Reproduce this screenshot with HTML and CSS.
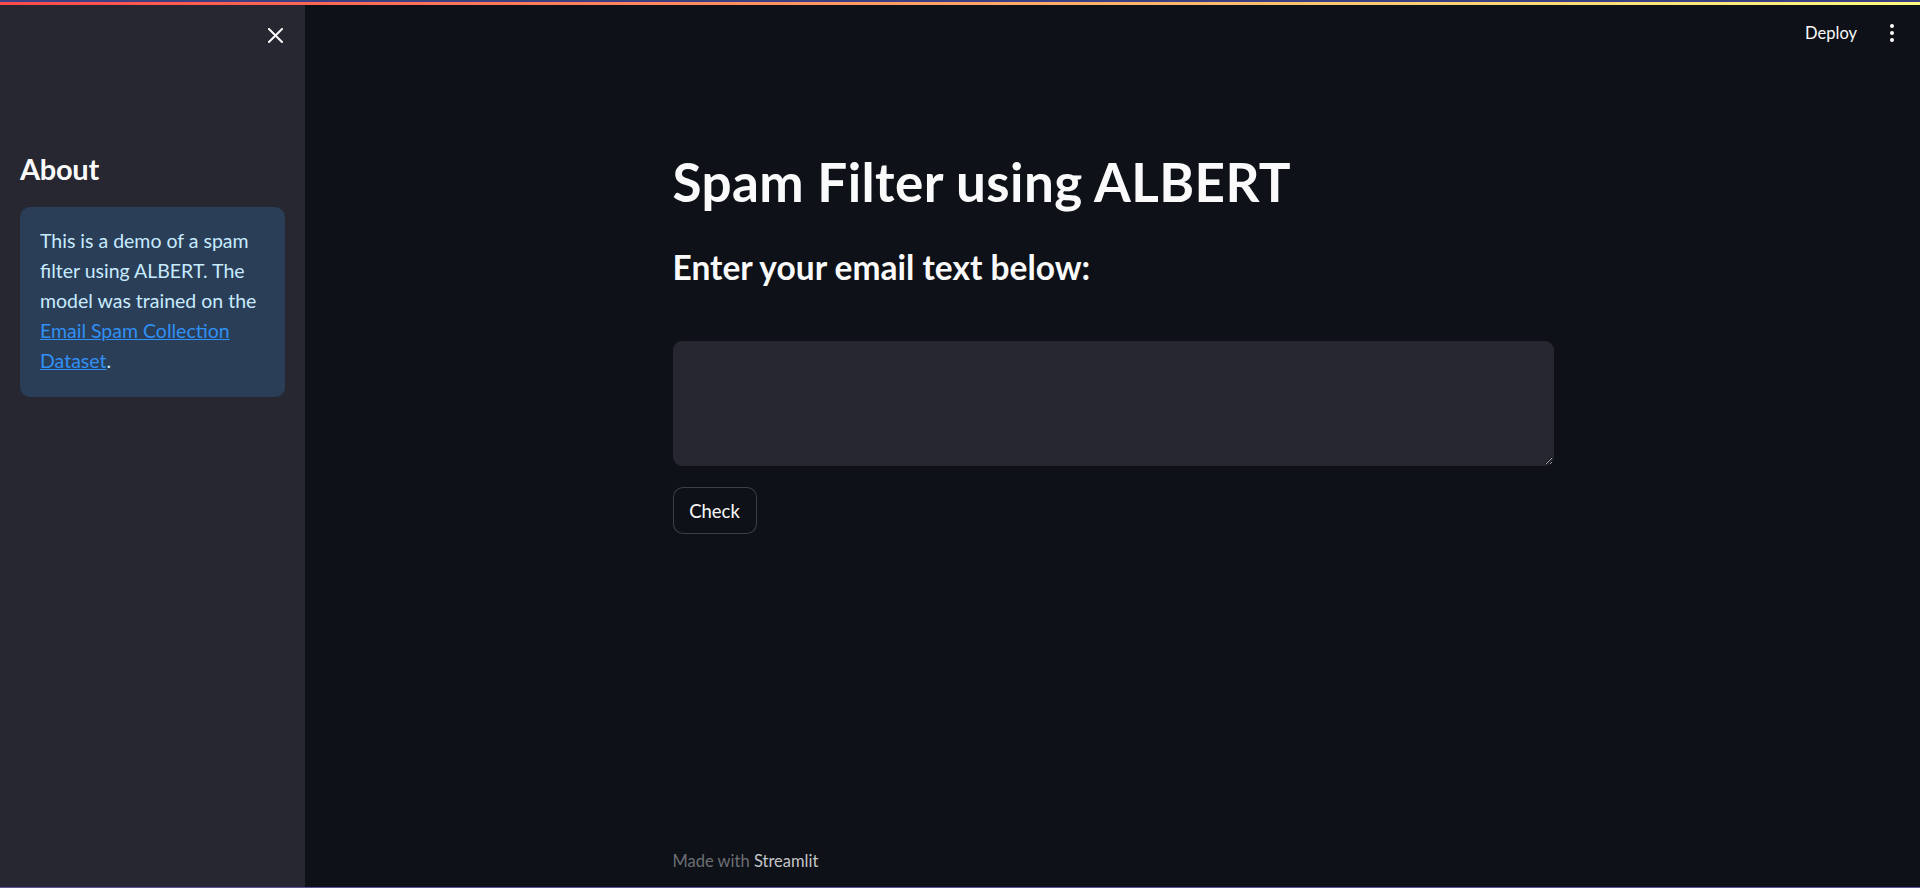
FILE: index.html
```html
<!DOCTYPE html>
<html lang="en">
<head>
<meta charset="utf-8">
<title>Spam Filter using ALBERT</title>
<link rel="stylesheet" href="styles.css">
</head>
<body>
<div class="frame">
  <div class="frame-top"></div>
  <div class="decoration"></div>
  <div class="app">
    <aside class="sidebar">
      <div class="sidebar-head">
        <button class="close-btn" aria-label="Close sidebar">
          <svg width="15" height="15" viewBox="0 0 15 15"><path d="M1 1L14 14M14 1L1 14" stroke="#fafafa" stroke-width="2" stroke-linecap="square" fill="none"/></svg>
        </button>
      </div>
      <div class="sidebar-content">
        <h2 class="side-title">About</h2>
        <div class="info">
          <p class="info-text">This is a demo of a spam filter using ALBERT. The model was trained on the <a href="#" class="link">Email Spam Collection Dataset</a>.</p>
        </div>
      </div>
    </aside>
    <main class="main">
      <header class="toolbar">
        <span class="deploy">Deploy</span>
        <span class="kebab"><i></i><i></i><i></i></span>
      </header>
      <section class="block">
        <h1 class="title">Spam Filter using ALBERT</h1>
        <h3 class="subtitle">Enter your email text below:</h3>
        <textarea class="email-input"></textarea>
        <div class="btn-row"><button class="check-btn">Check</button></div>
      </section>
      <footer class="footer">
        <div class="footer-inner">Made with <span class="brand">Streamlit</span></div>
      </footer>
    </main>
  </div>
  <div class="frame-bottom"></div>
</div>
</body>
</html>
```

FILE: styles.css
```css
* { box-sizing: border-box; }
html, body { margin: 0; padding: 0; }
body {
  background: #0e1117;
  color: #fafafa;
  font-family: Lato, "Noto Sans", sans-serif;
  width: 1920px;
  height: 888px;
  overflow: hidden;
}
.frame {
  display: flex;
  flex-direction: column;
  height: 888px;
}
.frame-top { height: 2px; background: #3a4082; flex: none; }
.decoration {
  height: 3px;
  flex: none;
  background: linear-gradient(90deg, #ff4b4b, #fffd80);
}
.frame-bottom { height: 1px; background: #5a5896; flex: none; }
.app {
  flex: 1;
  display: flex;
  min-height: 0;
}
.sidebar {
  width: 305px;
  flex: none;
  background: #262730;
  display: flex;
  flex-direction: column;
}
.sidebar-head {
  display: flex;
  justify-content: flex-end;
  padding: 23px 22px 0 0;
}
.close-btn {
  background: none;
  border: none;
  padding: 0;
  width: 15px;
  height: 15px;
  display: block;
}
.close-btn svg { display: block; }
.sidebar-content {
  padding: 0 20px;
}
.side-title {
  font-size: 29px;
  font-weight: 700;
  margin: 106px 0 0 0;
  line-height: 40px;
  letter-spacing: -0.3px;
}
.info {
  margin-top: 18px;
  background: #2a3e57;
  color: #c7ebff;
  border-radius: 10px;
  padding: 19px 20px 21px 20px;
}
.info-text {
  margin: 0;
  font-size: 19.5px;
  line-height: 30px;
}
.link { color: #3090f5; text-decoration: underline; }
.main {
  flex: 1;
  display: flex;
  flex-direction: column;
  min-width: 0;
}
.toolbar {
  display: flex;
  justify-content: flex-end;
  align-items: center;
  height: 56px;
  padding-right: 26px;
  gap: 33px;
}
.deploy {
  font-size: 16.5px;
  color: #fafafa;
}
.kebab {
  display: flex;
  flex-direction: column;
  gap: 3px;
  align-items: center;
}
.kebab i {
  display: block;
  width: 4px;
  height: 4px;
  border-radius: 50%;
  background: #fafafa;
}
.block {
  flex: 1;
  width: 880px;
  margin: 0 auto;
}
.title {
  font-size: 53px;
  font-weight: 700;
  line-height: 66px;
  margin: 88px 0 0 0;
  letter-spacing: 0.4px;
}
.subtitle {
  font-size: 33.5px;
  font-weight: 700;
  line-height: 42px;
  margin: 31px 0 0 0;
  letter-spacing: 0;
}
.email-input {
  display: block;
  width: 881px;
  height: 125px;
  margin-top: 53px;
  background: #262730;
  border: 1px solid #262730;
  border-radius: 9px;
  color: #fafafa;
  font-family: inherit;
  font-size: 20px;
  resize: vertical;
}
.btn-row { margin-top: 21px; }
.check-btn {
  height: 47px;
  width: 84px;
  background: #0e1117;
  border: 1px solid rgba(250, 250, 250, 0.2);
  border-radius: 10px;
  color: #fafafa;
  font-family: inherit;
  font-size: 18.5px;
  padding: 0;
}
.footer {
  width: 880px;
  margin: 0 auto;
  padding-bottom: 15px;
}
.footer-inner {
  font-size: 16.5px;
  line-height: 22px;
  color: #6c6f75;
}
.brand { color: #c4c5c8; }
```
